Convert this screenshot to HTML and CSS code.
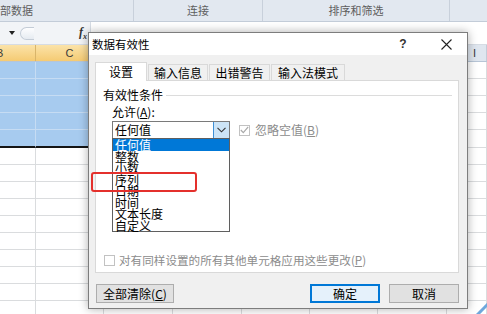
FILE: index.html
```html
<!DOCTYPE html>
<html lang="zh-CN">

<head>
    <meta charset="UTF-8">
    <title>数据有效性</title>
    <link rel="stylesheet" href="styles.css">
</head>

<body>
    <div class="sheet">
        <div class="ribbon">
            <div class="group g1">部数据</div>
            <div class="group g2">连接</div>
            <div class="group g3">排序和筛选</div>
            <div class="group g4"></div>
        </div>

        <div class="formula">
            <span class="name-arrow"></span>
            <span class="pill"></span>
            <span class="fx">f<sub>x</sub></span>
            <span class="formula-input"></span>
        </div>

        <div class="hd">
            <div class="cell cb sel">B</div><div class="cell cc sel">C</div><div class="cell cd">D</div><div class="cell ce">E</div><div class="cell cf">F</div><div class="cell cg">G</div><div class="cell ch">H</div><div class="cell ci">I</div>
        </div>

        <div class="row sel"><div class="cell cb"></div><div class="cell cc"></div><div class="cell cd"></div><div class="cell ce"></div><div class="cell cf"></div><div class="cell cg"></div><div class="cell ch"></div><div class="cell ci"></div></div>
        <div class="row sel"><div class="cell cb"></div><div class="cell cc"></div><div class="cell cd"></div><div class="cell ce"></div><div class="cell cf"></div><div class="cell cg"></div><div class="cell ch"></div><div class="cell ci"></div></div>
        <div class="row sel"><div class="cell cb"></div><div class="cell cc"></div><div class="cell cd"></div><div class="cell ce"></div><div class="cell cf"></div><div class="cell cg"></div><div class="cell ch"></div><div class="cell ci"></div></div>
        <div class="row sel"><div class="cell cb"></div><div class="cell cc"></div><div class="cell cd"></div><div class="cell ce"></div><div class="cell cf"></div><div class="cell cg"></div><div class="cell ch"></div><div class="cell ci"></div></div>
        <div class="row sel last"><div class="cell cb"></div><div class="cell cc"></div><div class="cell cd"></div><div class="cell ce"></div><div class="cell cf"></div><div class="cell cg"></div><div class="cell ch"></div><div class="cell ci"></div></div>
        <div class="row"><div class="cell cb"></div><div class="cell cc"></div><div class="cell cd"></div><div class="cell ce"></div><div class="cell cf"></div><div class="cell cg"></div><div class="cell ch"></div><div class="cell ci"></div></div>
        <div class="row"><div class="cell cb"></div><div class="cell cc"></div><div class="cell cd"></div><div class="cell ce"></div><div class="cell cf"></div><div class="cell cg"></div><div class="cell ch"></div><div class="cell ci"></div></div>
        <div class="row"><div class="cell cb"></div><div class="cell cc"></div><div class="cell cd"></div><div class="cell ce"></div><div class="cell cf"></div><div class="cell cg"></div><div class="cell ch"></div><div class="cell ci"></div></div>
        <div class="row"><div class="cell cb"></div><div class="cell cc"></div><div class="cell cd"></div><div class="cell ce"></div><div class="cell cf"></div><div class="cell cg"></div><div class="cell ch"></div><div class="cell ci"></div></div>
        <div class="row"><div class="cell cb"></div><div class="cell cc"></div><div class="cell cd"></div><div class="cell ce"></div><div class="cell cf"></div><div class="cell cg"></div><div class="cell ch"></div><div class="cell ci"></div></div>
        <div class="row"><div class="cell cb"></div><div class="cell cc"></div><div class="cell cd"></div><div class="cell ce"></div><div class="cell cf"></div><div class="cell cg"></div><div class="cell ch"></div><div class="cell ci"></div></div>
        <div class="row"><div class="cell cb"></div><div class="cell cc"></div><div class="cell cd"></div><div class="cell ce"></div><div class="cell cf"></div><div class="cell cg"></div><div class="cell ch"></div><div class="cell ci"></div></div>
        <div class="row"><div class="cell cb"></div><div class="cell cc"></div><div class="cell cd"></div><div class="cell ce"></div><div class="cell cf"></div><div class="cell cg"></div><div class="cell ch"></div><div class="cell ci"></div></div>
        <div class="row"><div class="cell cb"></div><div class="cell cc"></div><div class="cell cd"></div><div class="cell ce"></div><div class="cell cf"></div><div class="cell cg"></div><div class="cell ch"></div><div class="cell ci"></div></div>
        <div class="row"><div class="cell cb"></div><div class="cell cc"></div><div class="cell cd"></div><div class="cell ce"></div><div class="cell cf"></div><div class="cell cg"></div><div class="cell ch"></div><div class="cell ci"></div></div>
    </div>

    <div class="dialog">
        <div class="dlg-title">
            <span class="dlg-name">数据有效性</span>
            <span class="dlg-help">?</span>
            <span class="dlg-close">
                <svg width="11" height="11" viewBox="0 0 11 11"><path d="M0.5 0.5 L10.5 10.5 M10.5 0.5 L0.5 10.5" stroke="#222" stroke-width="1.1" fill="none"/></svg>
            </span>
        </div>
        <div class="dlg-body">
            <div class="tabs">
                <div class="tab active">设置</div>
                <div class="tab">输入信息</div>
                <div class="tab">出错警告</div>
                <div class="tab">输入法模式</div>
            </div>
            <div class="panel">
                <div class="legend"><span>有效性条件</span></div>
                <div class="label">允许(<u>A</u>):</div>
                <div class="combo-row">
                    <div class="combo">
                        <span class="combo-text">任何值</span>
                        <span class="combo-btn">
                            <svg width="9" height="6" viewBox="0 0 9 6"><path d="M0.5 0.8 L4.5 4.8 L8.5 0.8" stroke="#333" stroke-width="1.1" fill="none"/></svg>
                        </span>
                        <ul class="dropdown">
                            <li class="on">任何值</li>
                            <li>整数</li>
                            <li>小数</li>
                            <li>序列</li>
                            <li>日期</li>
                            <li>时间</li>
                            <li>文本长度</li>
                            <li>自定义</li>
                        </ul>
                    </div>
                    <div class="check off">
                        <span class="box">
                            <svg width="9" height="8" viewBox="0 0 9 8"><path d="M0.8 4 L3.3 6.6 L8.2 0.8" stroke="#a8a8a8" stroke-width="1.2" fill="none"/></svg>
                        </span>
                        忽略空值(<u>B</u>)
                    </div>
                </div>
                <div class="check off apply">
                    <span class="box"></span>
                    对有同样设置的所有其他单元格应用这些更改(<u>P</u>)
                </div>
            </div>
            <div class="buttons">
                <button class="btn">全部清除(<u>C</u>)</button>
                <button class="btn primary">确定</button>
                <button class="btn">取消</button>
            </div>
        </div>
    </div>

    <div class="mark"></div>
    <svg class="corner" width="12" height="12" viewBox="0 0 12 12"><path d="M1 12 L12 1" stroke="#6fa8dc" stroke-width="3" fill="none"/></svg>
</body>

</html>
```

FILE: styles.css
```css
* {
    margin: 0;
    padding: 0;
    box-sizing: border-box;
}

body {
    position: relative;
    width: 487px;
    height: 314px;
    overflow: hidden;
    background: #fff;
    color: #000;
    font-family: "Noto Sans CJK SC", "Liberation Sans", sans-serif;
    font-size: 12px;
}

/* spreadsheet behind the dialog */
.sheet {
    width: 487px;
    overflow: hidden;
}

.ribbon {
    display: flex;
    height: 22px;
    background: #e2e8f0;
    border-bottom: 1px solid #c3ccd8;
    color: #5e5e5e;
    font-size: 11px;
    line-height: 21px;
}

.ribbon .group {
    border-right: 1px solid #c8d0db;
    text-align: center;
    white-space: nowrap;
}

.g1 {
    width: 134px;
    text-align: left !important;
}

.g2 {
    width: 129px;
}

.g3 {
    width: 187px;
}

.g4 {
    flex: 1;
    border-right: none !important;
}

.formula {
    display: flex;
    align-items: center;
    height: 23px;
    background: #f2f4f7;
    border-bottom: 1px solid #d6dce4;
}

.name-arrow {
    width: 0;
    height: 0;
    margin-left: 9px;
    border-left: 3.5px solid transparent;
    border-right: 3.5px solid transparent;
    border-top: 4px solid #222;
}

.pill {
    width: 14px;
    height: 13px;
    margin-left: 5px;
    border: 1px solid #c4ccd6;
    border-right: none;
    border-radius: 7px 0 0 7px;
    background: linear-gradient(#fdfdfe, #e6ebf1);
}

.fx {
    margin-left: 45px;
    font-family: "Liberation Serif", serif;
    font-style: italic;
    font-weight: bold;
    font-size: 12px;
    color: #333;
}

.fx sub {
    font-size: 8px;
}

.formula-input {
    flex: 1;
    height: 100%;
    margin-left: 3px;
    background: #fff;
    border-left: 1px solid #d6dce4;
}

.hd,
.row {
    display: flex;
}

.hd {
    height: 17px;
    background: #dfe6ef;
    border-bottom: 1px solid #b7c5d6;
    color: #3a3a3a;
    font-family: "Liberation Sans", sans-serif;
    font-size: 11px;
    line-height: 16px;
}

.hd .cell {
    text-align: center;
    border-right: 1px solid #c2ccd8;
}

.hd .cb {
    text-align: left;
    text-indent: -4px;
}

.hd .sel {
    background: linear-gradient(#fbe3a9, #f5cb73);
    border-right-color: #d9b56a;
}

.row {
    height: 17px;
}

.row .cell {
    border-right: 1px solid #dadcde;
    border-bottom: 1px solid #dadcde;
}

.row.sel .cb,
.row.sel .cc {
    background: #a7cbef;
    border-color: #c6dcf3;
}

.row.last {
    height: 18px;
}

.row.last .cb,
.row.last .cc {
    border-bottom: 2px solid #151515;
}

.cell {
    flex: none;
    overflow: hidden;
}

.cb {
    width: 36px;
}

.cc {
    width: 68px;
}

.cd {
    width: 69px;
}

.ce {
    width: 69px;
}

.cf {
    width: 68px;
}

.cg {
    width: 68px;
}

.ch {
    width: 69px;
}

.ci {
    width: 40px;
    text-indent: 26px;
    text-align: left !important;
}

/* dialog */
.dialog {
    position: absolute;
    left: 88px;
    top: 32px;
    width: 380px;
    height: 277px;
    display: flex;
    flex-direction: column;
    border: 1px solid #7d7d7d;
    background: #f0f0f0;
    box-shadow: 0 0 9px rgba(0, 0, 0, 0.32);
}

.dlg-title {
    display: flex;
    align-items: center;
    height: 22px;
    background: #fff;
}

.dlg-name {
    flex: 1;
    padding-left: 3px;
    font-size: 11.5px;
}

.dlg-help {
    width: 20px;
    font-family: "Liberation Sans", sans-serif;
    font-size: 12px;
    font-weight: bold;
    color: #333;
    text-align: center;
}

.dlg-close {
    display: flex;
    justify-content: center;
    width: 42px;
    margin-left: 12px;
}

.dlg-body {
    flex: 1;
    display: flex;
    flex-direction: column;
    padding: 7px 8px 0 6px;
}

.tabs {
    display: flex;
    align-items: flex-end;
    height: 18px;
    position: relative;
    z-index: 1;
}

.tab {
    height: 16px;
    margin-right: 1px;
    border: 1px solid #d9d9d9;
    border-bottom: none;
    background: #f0f0f0;
    font-size: 12px;
    line-height: 15px;
    text-align: center;
    white-space: nowrap;
}

.tab.active {
    height: 19px;
    width: 52px;
    margin-bottom: -1px;
    background: #fff;
    line-height: 17px;
}

.tabs .tab:nth-child(2) {
    width: 60px;
}

.tabs .tab:nth-child(3) {
    width: 61px;
}

.tabs .tab:nth-child(4) {
    width: 74px;
}

.panel {
    display: flex;
    flex-direction: column;
    height: 193px;
    padding: 7px 6px 5px 7px;
    border: 1px solid #d9d9d9;
    background: #fff;
}

.legend {
    display: flex;
    align-items: center;
    height: 14px;
    line-height: 14px;
}

.legend::after {
    content: "";
    flex: 1;
    height: 1px;
    margin-left: 3px;
    background: #dcdcdc;
}

.label {
    margin: 3px 0 0 9px;
    height: 14px;
    line-height: 14px;
}

.combo-row {
    display: flex;
    align-items: center;
    margin: 2px 0 0 9px;
}

.combo {
    position: relative;
    display: flex;
    width: 118px;
    height: 18px;
    border: 1px solid #7a7a7a;
    background: #fff;
}

.combo-text {
    flex: 1;
    padding-left: 2px;
    line-height: 16px;
}

.combo-btn {
    display: flex;
    align-items: center;
    justify-content: center;
    width: 16px;
    background: #cce4f7;
    border-left: 1px solid #3d8fd6;
}

.dropdown {
    position: absolute;
    top: 16px;
    left: -1px;
    z-index: 2;
    width: 118px;
    height: 94px;
    list-style: none;
    border: 1px solid #5f5f5f;
    background: #fff;
}

.dropdown li {
    height: 11.5px;
    padding-left: 2px;
    line-height: 11.5px;
    font-size: 12px;
    white-space: nowrap;
}

.dropdown li.on {
    background: #0078d7;
    color: #fff;
}

.check {
    display: flex;
    align-items: center;
    height: 14px;
    line-height: 14px;
}

.check.off {
    color: #8c8c8c;
}

.combo-row .check {
    margin-left: 9px;
}

.box {
    display: flex;
    align-items: center;
    justify-content: center;
    width: 11px;
    height: 11px;
    margin-right: 5px;
    border: 1px solid #c2c2c2;
    background: #fff;
}

.apply {
    margin-top: auto;
    margin-left: 1px;
    font-size: 11.6px;
}

.apply .box {
    margin-right: 4px;
}

.buttons {
    display: flex;
    margin-top: 11px;
}

.btn {
    height: 19px;
    width: 70px;
    border: 1px solid #adadad;
    background: #e1e1e1;
    font-family: "Noto Sans CJK SC", sans-serif;
    font-size: 12px;
    line-height: 16px;
    color: #000;
}

.btn:first-child {
    width: 78px;
    margin-left: 1px;
    margin-right: auto;
}

.btn.primary {
    margin-right: 9px;
    border: 2px solid #0078d7;
    background: #e5f1fb;
    line-height: 14px;
}

/* red annotation box */
.mark {
    position: absolute;
    z-index: 5;
    left: 91px;
    top: 172px;
    width: 106px;
    height: 20px;
    border: 2px solid #e4302c;
    border-radius: 3px;
}

.corner {
    position: absolute;
    left: 476px;
    top: 303px;
}
```
